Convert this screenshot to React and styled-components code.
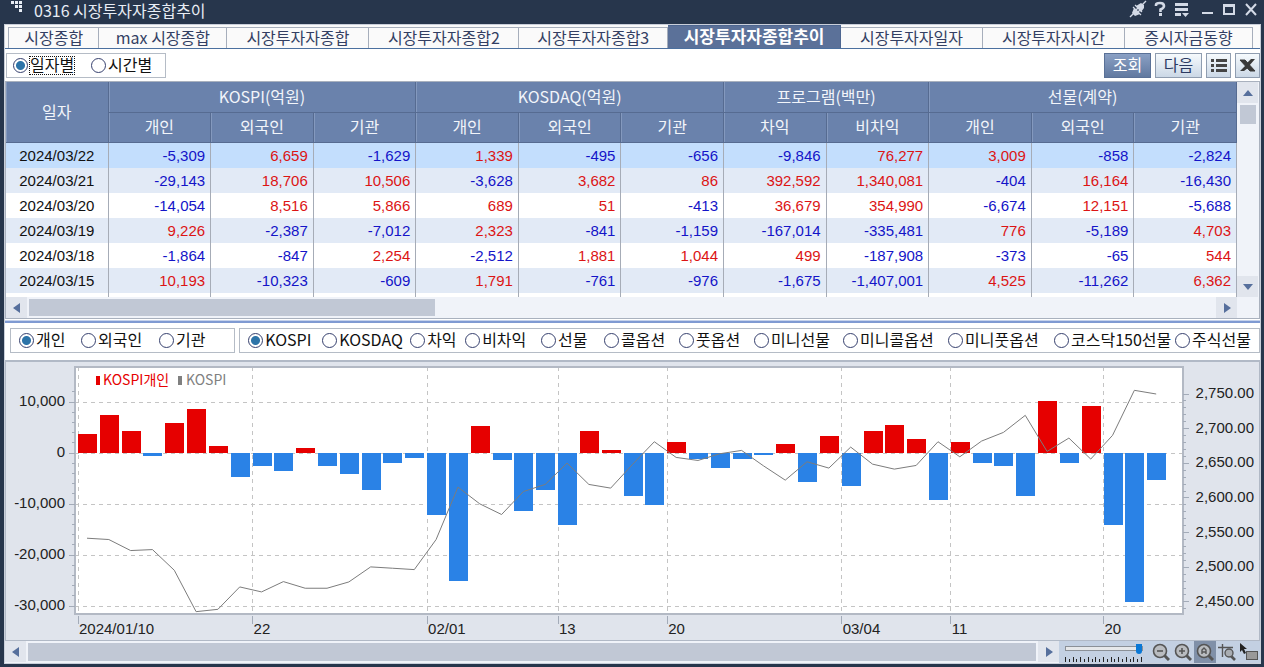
import React, { useState } from "react";
import styled, { createGlobalStyle, css } from "styled-components";

const GlobalStyle = createGlobalStyle`
  * {
    box-sizing: border-box;
  }
  body {
    margin: 0;
    background: #27364c;
    font-family: "Noto Sans CJK KR", "Liberation Sans", sans-serif;
    font-size: 16px;
    line-height: 20px;
    color: #111;
  }
  button,
  input {
    font: inherit;
    margin: 0;
  }
`;

const TABS = [
  { label: "시장종합", grow: 90 },
  { label: "max 시장종합", grow: 128 },
  { label: "시장투자자종합", grow: 142 },
  { label: "시장투자자종합2", grow: 150 },
  { label: "시장투자자종합3", grow: 149 },
  { label: "시장투자자종합추이", grow: 173 },
  { label: "시장투자자일자", grow: 142 },
  { label: "시장투자자시간", grow: 142 },
  { label: "증시자금동향", grow: 128 },
];

const GROUPS = [
  { label: "KOSPI(억원)", columns: ["개인", "외국인", "기관"] },
  { label: "KOSDAQ(억원)", columns: ["개인", "외국인", "기관"] },
  { label: "프로그램(백만)", columns: ["차익", "비차익"] },
  { label: "선물(계약)", columns: ["개인", "외국인", "기관"] },
];

const ROWS = [
  ["2024/03/22", -5309, 6659, -1629, 1339, -495, -656, -9846, 76277, 3009, -858, -2824],
  ["2024/03/21", -29143, 18706, 10506, -3628, 3682, 86, 392592, 1340081, -404, 16164, -16430],
  ["2024/03/20", -14054, 8516, 5866, 689, 51, -413, 36679, 354990, -6674, 12151, -5688],
  ["2024/03/19", 9226, -2387, -7012, 2323, -841, -1159, -167014, -335481, 776, -5189, 4703],
  ["2024/03/18", -1864, -847, 2254, -2512, 1881, 1044, 499, -187908, -373, -65, 544],
  ["2024/03/15", 10193, -10323, -609, 1791, -761, -976, -1675, -1407001, 4525, -11262, 6362],
];

const PERIODS = ["일자별", "시간별"];
const INVESTORS = ["개인", "외국인", "기관"];
const MARKETS = [
  "KOSPI",
  "KOSDAQ",
  "차익",
  "비차익",
  "선물",
  "콜옵션",
  "풋옵션",
  "미니선물",
  "미니콜옵션",
  "미니풋옵션",
  "코스닥150선물",
  "주식선물",
];

const NET_BUY = [
  3720, 7380, 4250, -650, 5930, 8610, 1310, -4640, -2600, -3580, 1040, -2600,
  -4050, -7240, -1900, -920, -12130, -25110, 5230, -1370, -11410, -7240, -14090,
  4250, 530, -8470, -10180, 2090, -1230, -2880, -1170, -390, 1760, -5730, 3270,
  -6520, 4250, 5420, 2740, -9200, 2090, -1900, -2600, -8470, 10193, -1864, 9226,
  -14054, -29143, -5309,
];

const KOSPI = [
  2541.9, 2540, 2524.1, 2525.5, 2495.7, 2435.9, 2439.3, 2471.6, 2464.4, 2479.3,
  2469.7, 2469.7, 2478.8, 2500.5, 2498.6, 2496.6, 2540, 2615.6, 2591.5, 2576.1,
  2609.3, 2619.5, 2650.3, 2619.5, 2614.2, 2648.4, 2681.1, 2658.5, 2654.1,
  2663.8, 2668.6, 2646.4, 2625.7, 2652.2, 2643.1, 2673.4, 2648.8, 2641.6,
  2646.9, 2681.1, 2659.4, 2682.1, 2694.6, 2719.2, 2667.1, 2686.4, 2656.1,
  2690.3, 2755.3, 2750,
];

const DATE_MARKS = [
  [0, "2024/01/10"],
  [8, "22"],
  [16, "02/01"],
  [22, "13"],
  [27, "20"],
  [35, "03/04"],
  [40, "11"],
  [47, "20"],
];

/* window */

const Window = styled.div`
  display: flex;
  flex-direction: column;
  min-width: 1180px;
  padding: 0 3px 2px 4px;
`;

const TitleBar = styled.header`
  display: flex;
  align-items: flex-start;
  height: 24px;
  padding: 0 1px 0 7px;
  color: #e8edf5;
`;

const Title = styled.h1`
  flex: 1;
  margin: 0 0 0 12px;
  font-size: 16px;
  font-weight: 400;
`;

const WindowButtons = styled.div`
  display: flex;
  align-items: center;
  gap: 4px;
  margin-left: 7px;
`;

const TitleButton = styled.button`
  display: flex;
  padding: 0;
  border: 0;
  background: none;
  color: #d3dae6;
`;

const Panel = styled.main`
  background: #fff;
  border: 1px solid #c9cfda;
`;

/* tabs */

const TabBar = styled.nav`
  display: flex;
  align-items: flex-end;
  height: 24px;
  padding: 0 7px 0 3px;
  background: #fafafa;
  border-bottom: 1px solid #4b709f;
`;

const Tab = styled.button`
  flex: ${(props) => props.$grow} 1 0;
  height: 21px;
  padding: 0 0 2px;
  border: 1px solid #a6aebb;
  border-width: 1px 1px 0 0;
  background: #fafafa;
  color: #333f63;
  line-height: 18px;
  white-space: nowrap;

  &:first-child {
    border-left-width: 1px;
  }

  ${(props) =>
    props.$active &&
    css`
      height: 23px;
      border-color: #4d6690;
      background: #5b7199;
      color: #fff;
      font-size: 17px;
      font-weight: 700;
    `}
`;

/* toolbar */

const Toolbar = styled.div`
  display: flex;
  align-items: center;
  justify-content: space-between;
  height: 32px;
  padding-left: 1px;
`;

const ToolbarButtons = styled.div`
  display: flex;
  gap: 4px;
`;

const ToolButton = styled.button`
  display: flex;
  align-items: center;
  justify-content: center;
  width: ${(props) => (props.$icon ? 25 : 47)}px;
  height: 25px;
  padding: 0 0 2px;
  border: 1px solid ${(props) => (props.$primary ? "#5a7197" : "#8f9db0")};
  background: ${(props) =>
    props.$primary
      ? "linear-gradient(#8aa0c4, #6179a0)"
      : "linear-gradient(#f6fafd, #cbd8e6)"};
  color: ${(props) => (props.$primary ? "#fff" : "#2b3a62")};
`;

const RadioBox = styled.fieldset`
  display: grid;
  grid-template-columns: ${(props) => props.$columns};
  align-items: center;
  min-width: 0;
  height: 25px;
  margin: 0;
  padding: 0 0 0 ${(props) => props.$inset || 8}px;
  border: 1px solid #b5bcc6;
  background: #fff;
`;

const RadioLabel = styled.label`
  display: flex;
  align-items: center;
  gap: 2px;
  white-space: nowrap;
`;

const RadioText = styled.span`
  padding-bottom: 2px;
  line-height: 15px;
  outline: ${(props) => (props.$focused ? "1px dotted #111" : "none")};
`;

const Radio = styled.input`
  appearance: none;
  flex: none;
  width: 15px;
  height: 15px;
  border: 1px solid #36406e;
  border-radius: 50%;
  background: #fff;

  &:checked {
    background: radial-gradient(circle, #2d74a8 4px, #fff 5px);
  }
`;

/* table */

const GridFrame = styled.section`
  display: grid;
  grid-template-columns: 1fr 22px;
  grid-template-rows: auto 21px;
  border: 1px solid #a9b1be;
`;

const Table = styled.table`
  width: 100%;
  table-layout: fixed;
  border-collapse: separate;
  border-spacing: 0;
`;

const HeadCell = styled.th`
  height: ${(props) => (props.$sub ? 30 : 31)}px;
  padding: 0 0 3px;
  border-right: 1px solid #566b91;
  border-bottom: 1px solid #566b91;
  box-shadow: inset 1px 0 #8499be;
  background: #6a82ac;
  color: #f2f5fa;
  font-weight: 400;
`;

const BodyRow = styled.tr`
  height: 25px;
  background: #fff;

  &:nth-child(even) {
    background: #e2eaf6;
  }
  &:first-child {
    background: #c3defd;
  }
  &:last-child {
    height: 4px;
    background: #fff;
  }
`;

const Cell = styled.td`
  padding: 0 5px 0 0;
  border-right: 1px solid #a6acb7;
  color: ${(props) => (props.$down ? "#1414c8" : "#dc1414")};
  font-family: "Liberation Sans", sans-serif;
  font-size: 15px;
  text-align: right;
`;

const DateCell = styled(Cell)`
  padding: 0;
  color: #111;
  text-align: center;
`;

/* scroll bars */

const ScrollTrack = styled.div`
  display: flex;
  flex-direction: ${(props) => (props.$vertical ? "column" : "row")};
  align-items: stretch;
  min-width: 0;
  background: #f0f3f9;
`;

const ScrollButton = styled.button`
  display: flex;
  flex: none;
  align-items: center;
  justify-content: center;
  width: 21px;
  height: 21px;
  padding: 0;
  border: 0;
  background: #e1e5ed;
`;

const ScrollArea = styled.div`
  display: flex;
  flex: 1;
  flex-direction: ${(props) => (props.$vertical ? "column" : "row")};
  padding: ${(props) => (props.$vertical ? "2px 3px" : "2px")};
`;

const ScrollThumb = styled.div`
  flex: 0 0 ${(props) => props.$size};
  background: #c1c8d5;
`;

const Corner = styled.div`
  background: #f0f3f9;
`;

const Splitter = styled.hr`
  height: 3px;
  margin: 1px 0 0;
  border: 0;
  background: #7f9ad2;
  border-top: 1px solid #c5d2ec;
`;

const OptionBar = styled.div`
  display: grid;
  grid-template-columns: 225fr 1020fr;
  gap: 4px;
  padding: 5px 0 7px 5px;
`;

/* chart */

const ChartFrame = styled.section`
  border: 1px solid #b1b9c6;
  border-top-width: 2px;
  background: #e0e4ec;
`;

const ChartSvg = styled.svg`
  display: block;
  width: 100%;
`;

const AxisText = styled.text`
  fill: #222;
  font-family: "Liberation Sans", sans-serif;
  font-size: 15px;
`;

const LegendText = styled.text`
  font-size: 14px;
`;

const ChartFooter = styled.footer`
  display: flex;
  height: 22px;

  ${ScrollTrack} {
    flex: 1;
  }
`;

const ZoomTools = styled.div`
  display: flex;
  align-items: center;
  padding-left: 6px;
  background: #c3d0e2;
`;

const SliderBox = styled.div`
  display: flex;
  flex-direction: column;
  gap: 2px;
  width: 80px;
  margin-right: 5px;
`;

const Slider = styled.input`
  appearance: none;
  width: 78px;
  height: 12px;
  background: none;

  &::-webkit-slider-runnable-track {
    height: 5px;
    border: 1px solid #8b9097;
    background: #e6e8ea;
  }
  &::-webkit-slider-thumb {
    appearance: none;
    width: 6px;
    height: 10px;
    margin-top: -3px;
    background: #0a78d6;
    border-radius: 0 0 3px 3px;
  }
`;

const ZoomButton = styled.button`
  display: flex;
  align-items: center;
  justify-content: center;
  width: 22px;
  height: 22px;
  padding: 0;
  border: 0;
  background: ${(props) => (props.$active ? "#8090a8" : "none")};
`;

const ARROWS = {
  up: "M0 8 L5 2 L10 8 Z",
  down: "M0 2 L5 8 L10 2 Z",
  left: "M8 0 L1 5 L8 10 Z",
  right: "M2 0 L9 5 L2 10 Z",
};

function Arrow({ dir }) {
  return (
    <svg width="10" height="10" viewBox="0 0 10 10">
      <path d={ARROWS[dir]} fill="#566f9c" />
    </svg>
  );
}

function RadioGroup({ name, items, columns, inset, focusFirst }) {
  const [selected, setSelected] = useState(items[0]);

  return (
    <RadioBox $columns={columns} $inset={inset}>
      {items.map((item) => (
        <RadioLabel key={item}>
          <Radio
            type="radio"
            name={name}
            checked={selected === item}
            onChange={() => setSelected(item)}
          />
          <RadioText $focused={focusFirst && selected === item}>{item}</RadioText>
        </RadioLabel>
      ))}
    </RadioBox>
  );
}

function TitleIcons() {
  return (
    <>
      <WindowButtons>
        <TitleButton aria-label="연결">
          <svg width="18" height="18" viewBox="0 0 18 18">
            <path d="M1 17 L5 13 M12 6 L17 1" stroke="currentColor" strokeWidth="1.4" />
            <path d="M3 13 L5 8 L11 14 L6 16 Z" fill="currentColor" />
            <path d="M7 6 L12 3 L15 5 L15 8 L12 12 Z" fill="currentColor" />
            <path d="M7 10 L9 8 M9 12 L11 10" stroke="currentColor" strokeWidth="1.4" />
            <path d="M4 7 L12 15 M6 5 L13 12" stroke="currentColor" strokeWidth="1.2" />
          </svg>
        </TitleButton>
        <TitleButton aria-label="도움말">
          <svg width="18" height="18" viewBox="0 0 18 18">
            <path
              d="M5 6 V5 Q5 3 9 3 Q13 3 13 6 Q13 8 9.5 9.5 V12"
              fill="none"
              stroke="currentColor"
              strokeWidth="2.6"
            />
            <rect x="8" y="13" width="3" height="3" fill="currentColor" />
          </svg>
        </TitleButton>
        <TitleButton aria-label="메뉴">
          <svg width="18" height="18" viewBox="0 0 18 18">
            <path
              d="M2 3h13v3h-13z M2 8h13v3h-13z M2 13h6v3h-6z M9 13h7l-3.5 4z"
              fill="currentColor"
            />
          </svg>
        </TitleButton>
      </WindowButtons>
      <WindowButtons>
        <TitleButton aria-label="최소화">
          <svg width="18" height="18" viewBox="0 0 18 18">
            <rect x="4" y="12" width="11" height="2" fill="currentColor" />
          </svg>
        </TitleButton>
        <TitleButton aria-label="최대화">
          <svg width="18" height="18" viewBox="0 0 18 18">
            <path
              d="M3 4h12v11h-12z M5 7v6h8v-6z"
              fill="currentColor"
              fillRule="evenodd"
            />
          </svg>
        </TitleButton>
        <TitleButton aria-label="닫기">
          <svg width="18" height="18" viewBox="0 0 18 18">
            <path d="M4 4 L14 15 M14 4 L4 15" stroke="currentColor" strokeWidth="2" />
          </svg>
        </TitleButton>
      </WindowButtons>
    </>
  );
}

function InvestorTable() {
  return (
    <GridFrame>
      <Table>
        <thead>
          <tr>
            <HeadCell rowSpan={2}>일자</HeadCell>
            {GROUPS.map((group) => (
              <HeadCell key={group.label} colSpan={group.columns.length}>
                {group.label}
              </HeadCell>
            ))}
          </tr>
          <tr>
            {GROUPS.map((group) =>
              group.columns.map((column) => (
                <HeadCell key={group.label + column} $sub>
                  {column}
                </HeadCell>
              ))
            )}
          </tr>
        </thead>
        <tbody>
          {ROWS.map(([date, ...values]) => (
            <BodyRow key={date}>
              <DateCell>{date}</DateCell>
              {values.map((value, i) => (
                <Cell key={i} $down={value < 0}>
                  {value.toLocaleString("en-US")}
                </Cell>
              ))}
            </BodyRow>
          ))}
          <BodyRow>
            {ROWS[0].map((_, i) => (
              <Cell key={i} />
            ))}
          </BodyRow>
        </tbody>
      </Table>
      <ScrollTrack $vertical>
        <ScrollButton aria-label="위로">
          <Arrow dir="up" />
        </ScrollButton>
        <ScrollArea $vertical>
          <ScrollThumb $size="19px" />
        </ScrollArea>
        <ScrollButton aria-label="아래로">
          <Arrow dir="down" />
        </ScrollButton>
      </ScrollTrack>
      <ScrollTrack>
        <ScrollButton aria-label="왼쪽으로">
          <Arrow dir="left" />
        </ScrollButton>
        <ScrollArea>
          <ScrollThumb $size="34.3%" />
        </ScrollArea>
        <ScrollButton aria-label="오른쪽으로">
          <Arrow dir="right" />
        </ScrollButton>
      </ScrollTrack>
      <Corner />
    </GridFrame>
  );
}

const PLOT = { left: 69, right: 1177, top: 5, bottom: 252 };
const STEP = 21.82;
const BAR = 19;

const xAt = (i) => 81 + i * STEP;
const yBuy = (value) => 91 - value * 0.0051;
const yIndex = (value) => 32 + (2750 - value) * 0.693;

const range = (from, to, step) => {
  const out = [];
  for (let v = from; v <= to; v += step) out.push(v);
  return out;
};

function TrendChart() {
  const line = KOSPI.map((v, i) => `${xAt(i)},${yIndex(v)}`).join(" ");

  return (
    <ChartSvg viewBox="0 0 1253 278">
      <rect
        x={PLOT.left}
        y={PLOT.top}
        width={PLOT.right - PLOT.left}
        height={PLOT.bottom - PLOT.top}
        fill="#fff"
      />
      <g stroke="#c4c4c4" strokeWidth="1" strokeDasharray="4 4" shapeRendering="crispEdges">
        {range(-30000, 10000, 10000).map((v) => (
          <line key={v} x1={PLOT.left} x2={PLOT.right} y1={yBuy(v)} y2={yBuy(v)} />
        ))}
        {DATE_MARKS.map(([i]) => (
          <line key={i} x1={xAt(i) - 9} x2={xAt(i) - 9} y1={PLOT.top} y2={PLOT.bottom} />
        ))}
      </g>
      {NET_BUY.map((v, i) => (
        <rect
          key={i}
          x={Math.round(xAt(i) - 9)}
          y={v > 0 ? Math.round(yBuy(v)) : 91}
          width={BAR}
          height={Math.max(2, Math.round(Math.abs(v) * 0.0051))}
          fill={v > 0 ? "#e60000" : "#2a82e6"}
        />
      ))}
      <polyline points={line} fill="none" stroke="#7c7c7c" strokeWidth="1" />
      <rect
        x={PLOT.left}
        y={PLOT.top}
        width={PLOT.right - PLOT.left}
        height={PLOT.bottom - PLOT.top}
        fill="none"
        stroke="#b3b9c4"
        strokeWidth="2"
      />
      <g stroke="#a3abb8" shapeRendering="crispEdges">
        {range(-30000, 12000, 2000).map((v) => (
          <line
            key={v}
            x1={PLOT.left - (v % 10000 === 0 ? 6 : 3)}
            x2={PLOT.left}
            y1={yBuy(v)}
            y2={yBuy(v)}
          />
        ))}
        {range(2440, 2750, 10).map((v) => (
          <line
            key={v}
            x1={PLOT.right}
            x2={PLOT.right + (v % 50 === 0 ? 6 : 3)}
            y1={yIndex(v)}
            y2={yIndex(v)}
          />
        ))}
        {DATE_MARKS.map(([i]) => (
          <line
            key={i}
            x1={xAt(i) - 9}
            x2={xAt(i) - 9}
            y1={PLOT.bottom + 2}
            y2={PLOT.bottom + 10}
          />
        ))}
      </g>
      {range(-30000, 10000, 10000).map((v) => (
        <AxisText key={v} x="59" y={yBuy(v) + 4} textAnchor="end">
          {v.toLocaleString("en-US")}
        </AxisText>
      ))}
      {range(2450, 2750, 50).map((v) => (
        <AxisText key={v} x="1248" y={yIndex(v) + 4} textAnchor="end">
          {v.toLocaleString("en-US", { minimumFractionDigits: 2 })}
        </AxisText>
      ))}
      {DATE_MARKS.map(([i, label]) => (
        <AxisText key={i} x={xAt(i) - 8} y="272">
          {label}
        </AxisText>
      ))}
      <rect x="90" y="14" width="4" height="9" fill="#e60000" />
      <LegendText x="97" y="23" fill="#e60000">
        KOSPI개인
      </LegendText>
      <rect x="172" y="14" width="4" height="9" fill="#808080" />
      <LegendText x="180" y="23" fill="#808080">
        KOSPI
      </LegendText>
    </ChartSvg>
  );
}

function Magnifier({ children }) {
  return (
    <svg width="18" height="18" viewBox="0 0 18 18" fill="none" stroke="#555">
      <path d="M12 12 L17 17" strokeWidth="3" />
      <circle cx="8" cy="8" r="6.5" fill="#b9bcc0" strokeWidth="1.6" />
      {children}
    </svg>
  );
}

function ZoomBar() {
  return (
    <ZoomTools>
      <SliderBox>
        <Slider type="range" min="0" max="10" defaultValue="10" aria-label="확대 비율" />
        <svg width="78" height="5" viewBox="0 0 78 5" shapeRendering="crispEdges">
          {range(0, 20, 1).map((i) => (
            <rect
              key={i}
              x={Math.round(i * 3.8)}
              y={i % 2 ? 2 : 0}
              width="1"
              height={i % 2 ? 3 : 5}
              fill="#222"
            />
          ))}
        </svg>
      </SliderBox>
      <ZoomButton aria-label="축소">
        <Magnifier>
          <path d="M5 8 H11" strokeWidth="1.6" />
        </Magnifier>
      </ZoomButton>
      <ZoomButton aria-label="확대">
        <Magnifier>
          <path d="M5 8 H11 M8 5 V11" strokeWidth="1.6" />
        </Magnifier>
      </ZoomButton>
      <ZoomButton aria-label="자동" $active>
        <Magnifier>
          <path d="M6 11 V7 L8 5 L10 7 V11 M6 9 H10" strokeWidth="1.4" />
        </Magnifier>
      </ZoomButton>
      <ZoomButton aria-label="영역 확대">
        <svg width="18" height="18" viewBox="0 0 18 18" fill="none" stroke="#555">
          <path d="M0 4.5 H15 M4.5 1 V14" strokeWidth="1.4" />
          <path d="M13 13 L17 17" strokeWidth="2.6" />
          <circle cx="11" cy="10" r="4" fill="#a9adb2" strokeWidth="1.4" />
        </svg>
      </ZoomButton>
      <ZoomButton aria-label="선택">
        <svg width="20" height="18" viewBox="0 0 20 18">
          <path d="M1 0 V9 L3 7 L5 11 L7 10 L5 6 H8 Z" fill="#222" />
          <rect x="7.5" y="8.5" width="11" height="8" fill="#999" stroke="#555" />
        </svg>
      </ZoomButton>
    </ZoomTools>
  );
}

function App() {
  const [activeTab, setActiveTab] = useState("시장투자자종합추이");

  return (
    <>
      <GlobalStyle />
      <Window>
        <TitleBar>
          <svg width="11" height="16" viewBox="0 0 11 16" fill="#e8edf5">
            <path d="M0 1h3v3h-3z M4 1h3v3h-3z M8 1h3v3h-3z M4 5h3v3h-3z M8 5h3v3h-3z M8 9h3v3h-3z" />
          </svg>
          <Title>0316 시장투자자종합추이</Title>
          <TitleIcons />
        </TitleBar>
        <Panel>
          <TabBar>
            {TABS.map((tab) => (
              <Tab
                key={tab.label}
                $grow={tab.grow}
                $active={tab.label === activeTab}
                onClick={() => setActiveTab(tab.label)}
              >
                {tab.label}
              </Tab>
            ))}
          </TabBar>
          <Toolbar>
            <RadioGroup name="period" items={PERIODS} columns="78px 74px" inset={6} focusFirst />
            <ToolbarButtons>
              <ToolButton $primary>조회</ToolButton>
              <ToolButton>다음</ToolButton>
              <ToolButton $icon aria-label="목록">
                <svg width="17" height="15" viewBox="0 0 17 15">
                  <path
                    d="M1 2h3v3h-3z M6 2h11v3h-11z M1 7h3v3h-3z M6 7h11v3h-11z M1 12h3v3h-3z M6 12h11v3h-11z"
                    fill="#444"
                  />
                </svg>
              </ToolButton>
              <ToolButton $icon aria-label="엑셀">
                <svg width="17" height="15" viewBox="0 0 17 15">
                  <path d="M1 3 H6 L16 14 H11 Z" fill="#3a3a3a" stroke="#3a3a3a" />
                  <path d="M16 2 H12 L8 6 L10 9 Z M7 8 L1 14 H5 L9 11 Z" fill="#3a3a3a" />
                </svg>
              </ToolButton>
            </ToolbarButtons>
          </Toolbar>
          <InvestorTable />
          <Splitter />
          <OptionBar>
            <RadioGroup name="investor" items={INVESTORS} columns="62fr 78fr 75fr" />
            <RadioGroup
              name="market"
              items={MARKETS}
              columns="74fr 88fr 55fr 76fr 63fr 75fr 75fr 89fr 105fr 106fr 121fr 84fr"
            />
          </OptionBar>
          <ChartFrame>
            <TrendChart />
          </ChartFrame>
          <ChartFooter>
            <ScrollTrack>
              <ScrollButton aria-label="이전">
                <Arrow dir="left" />
              </ScrollButton>
              <ScrollArea>
                <ScrollThumb $size="100%" />
              </ScrollArea>
              <ScrollButton aria-label="이후">
                <Arrow dir="right" />
              </ScrollButton>
            </ScrollTrack>
            <ZoomBar />
          </ChartFooter>
        </Panel>
      </Window>
    </>
  );
}

export default App;
